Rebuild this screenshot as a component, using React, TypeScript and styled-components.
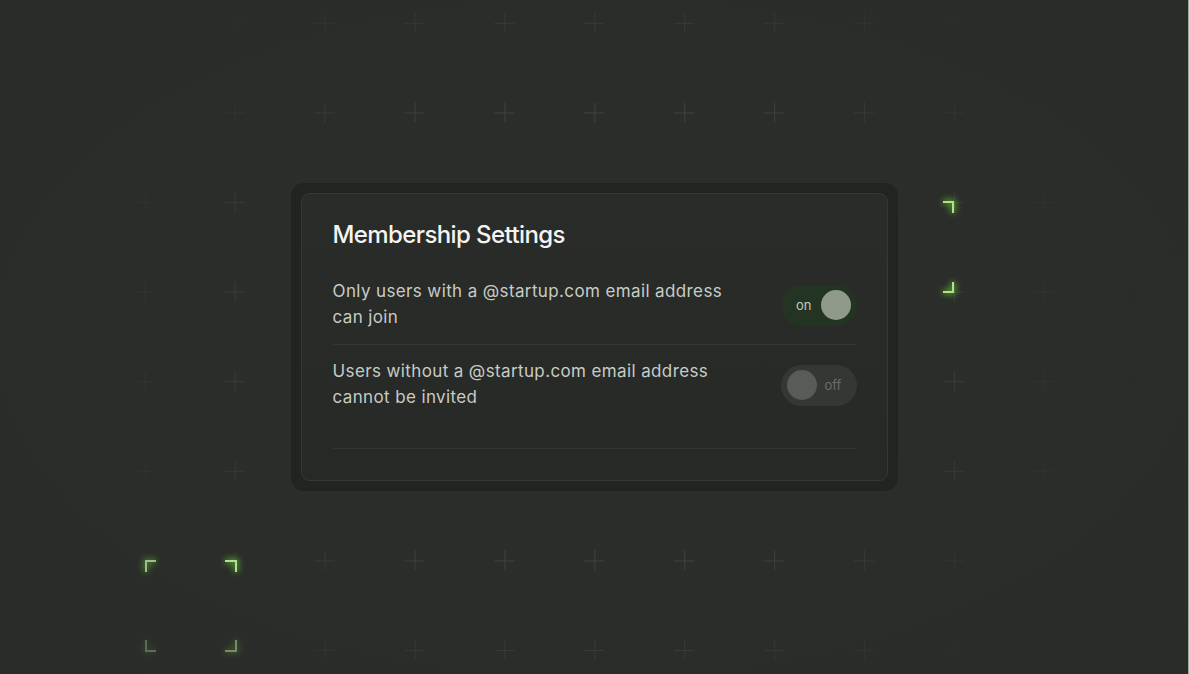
import React, { useState } from 'react';
import styled, { createGlobalStyle } from 'styled-components';

const GlobalStyle = createGlobalStyle`
  * {
    box-sizing: border-box;
  }

  html,
  body {
    margin: 0;
    padding: 0;
    background: #2b2d2a;
  }

  body {
    font-family: Inter, 'Noto Sans', sans-serif;
    -webkit-font-smoothing: antialiased;
  }
`;

const Page = styled.div`
  position: relative;
  width: 100vw;
  height: 100vh;
  overflow: hidden;
  display: flex;
  align-items: center;
  justify-content: center;
  background: radial-gradient(ellipse at center, #2d2f2c 0%, #2b2d2a 60%, #2a2c29 100%);
  border-right: 1px solid #a3a3a3;
`;

const Canvas = styled.svg`
  position: absolute;
  inset: 0;
  width: 100%;
  height: 100%;
  pointer-events: none;
`;

const Frame = styled.div`
  position: relative;
  width: 607px;
  padding: 10px;
  background: #212421;
  border-radius: 13px;
`;

const Card = styled.section`
  border: 1px solid #353934;
  border-radius: 9px;
  background: linear-gradient(180deg, #292c29 0%, #262926 100%);
  padding: 25px 30px 31px 31px;
`;

const Title = styled.h2`
  margin: 0 0 13px;
  font-size: 24px;
  line-height: 32px;
  font-weight: 500;
  letter-spacing: -0.6px;
  color: #f3f4f2;
`;

const Row = styled.div`
  display: flex;
  align-items: center;
  justify-content: space-between;
  gap: 24px;
  padding: 14px 0;
  border-bottom: 1px solid #343833;

  & + & {
    padding-top: 13px;
  }

  &:last-of-type {
    border-bottom: none;
  }
`;

const RowText = styled.p`
  margin: 0;
  max-width: 410px;
  font-size: 17px;
  line-height: 26px;
  letter-spacing: 0.38px;
  color: #c8cbc6;
`;

const Switch = styled.button<{ $on: boolean }>`
  flex: none;
  display: flex;
  align-items: center;
  flex-direction: ${p => (p.$on ? 'row' : 'row-reverse')};
  justify-content: flex-end;
  gap: ${p => (p.$on ? 9 : 8)}px;
  width: 76px;
  height: 41px;
  margin-top: 2px;
  padding: 0 6px;
  border: none;
  border-radius: 999px;
  background: ${p => (p.$on ? '#233522' : '#343734')};
  cursor: pointer;
  font-family: inherit;
`;

const SwitchLabel = styled.span<{ $on: boolean }>`
  font-size: 13px;
  line-height: 1;
  color: ${p => (p.$on ? '#c2c9be' : '#6a6d69')};
`;

const Knob = styled.span<{ $on: boolean }>`
  width: 30px;
  height: 30px;
  border-radius: 50%;
  background: ${p => (p.$on ? '#8f9a8b' : '#585b58')};
`;

const Divider = styled.hr`
  margin: 24px 0 0;
  border: none;
  border-top: 1px solid #313530;
`;

// corner marks on the grid, bright = lit up, dim = fading
const brackets = [
  { d: 'M943 202H953V213', tone: 'bright' },
  { d: 'M953 282V292H943', tone: 'bright' },
  { d: 'M146 572V561H156', tone: 'mid' },
  { d: 'M225 561H236V572', tone: 'bright' },
  { d: 'M146 640V651H156', tone: 'dim' },
  { d: 'M236 640V651H225', tone: 'low' },
];

const tones: Record<string, { stroke: string; glow: number }> = {
  bright: { stroke: '#b6dd90', glow: 0.75 },
  mid: { stroke: '#9fbd88', glow: 0.55 },
  low: { stroke: '#7a8870', glow: 0.3 },
  dim: { stroke: '#5f6a5a', glow: 0.15 },
};

const Backdrop: React.FC = () => (
  <Canvas>
    <defs>
      <pattern id="plus" x="10" y="-22" width="89.9" height="89.6" patternUnits="userSpaceOnUse">
        <path d="M35 45.5H55M45.5 35V55" stroke="#464945" strokeWidth="1" shapeRendering="crispEdges" />
      </pattern>
      <radialGradient
        id="fadeGrad"
        gradientUnits="userSpaceOnUse"
        cx="594"
        cy="337"
        r="545"
        gradientTransform="translate(594 337) scale(1 0.86) translate(-594 -337)"
      >
        <stop offset="0.35" stopColor="#fff" stopOpacity="1" />
        <stop offset="1" stopColor="#fff" stopOpacity="0" />
      </radialGradient>
      <mask id="fade">
        <rect width="1189" height="674" fill="url(#fadeGrad)" />
      </mask>
      <filter id="blur" x="-100%" y="-100%" width="300%" height="300%">
        <feGaussianBlur stdDeviation="3" />
      </filter>
    </defs>
    <rect width="1189" height="674" fill="url(#plus)" mask="url(#fade)" />
    {brackets.map((b, i) => (
      <g key={i} fill="none">
        <path
          d={b.d}
          stroke="#62c22e"
          strokeWidth="5"
          opacity={tones[b.tone].glow}
          filter="url(#blur)"
        />
        <path d={b.d} stroke={tones[b.tone].stroke} strokeWidth="2" />
      </g>
    ))}
  </Canvas>
);

const settings = [
  { id: 'domain', text: 'Only users with a @startup.com email address can join', on: true },
  { id: 'invite', text: 'Users without a @startup.com email address cannot be invited', on: false },
];

const App: React.FC = () => {
  const [values, setValues] = useState<Record<string, boolean>>({
    domain: true,
    invite: false,
  });

  const toggle = (id: string) => {
    setValues({ ...values, [id]: !values[id] });
  };

  return (
    <Page>
      <GlobalStyle />
      <Backdrop />
      <Frame>
        <Card>
          <Title>Membership Settings</Title>
          {settings.map(s => (
            <Row key={s.id}>
              <RowText>{s.text}</RowText>
              <Switch $on={values[s.id]} onClick={() => toggle(s.id)}>
                <SwitchLabel $on={values[s.id]}>{values[s.id] ? 'on' : 'off'}</SwitchLabel>
                <Knob $on={values[s.id]} />
              </Switch>
            </Row>
          ))}
          <Divider />
        </Card>
      </Frame>
    </Page>
  );
};

export default App;
